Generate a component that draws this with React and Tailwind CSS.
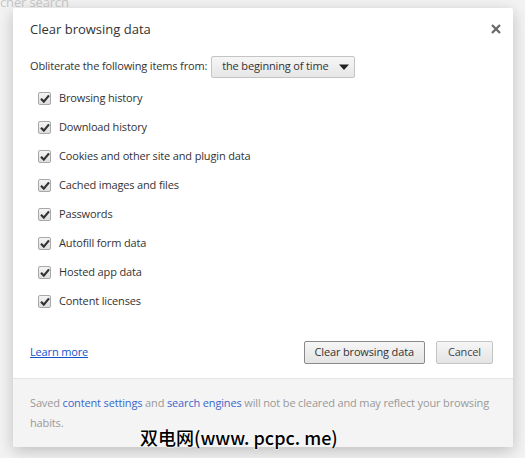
import React from 'react';

const items = [
  'Browsing history',
  'Download history',
  'Cookies and other site and plugin data',
  'Cached images and files',
  'Passwords',
  'Autofill form data',
  'Hosted app data',
  'Content licenses',
];

const Check = () => (
  <span className="flex h-[13px] w-[13px] items-center justify-center rounded-[2px] border border-[#a8a8a8] bg-gradient-to-b from-[#f4f4f4] to-[#dedede]">
    <svg width="10" height="9" viewBox="0 0 10 9">
      <path d="M1 4.8 L3.8 7.6 L9 1.4" fill="none" stroke="#333" strokeWidth="2.2" strokeLinejoin="miter" />
    </svg>
  </span>
);

const ClearBrowsingData = () => {
  return (
    <div className="relative h-[458px] w-[525px] overflow-hidden bg-[#f3f3f3] font-['Open_Sans',sans-serif] text-[11px] tracking-[-0.15px] text-[#333]">
      <div className="absolute left-0 top-[-7px] text-[13px] text-[#c8c8c8]">cher search</div>
      <div className="absolute left-[13px] top-[8px] flex h-[439px] w-[500px] flex-col rounded-[2px] bg-white shadow-[0_4px_16px_rgba(0,0,0,0.22)]">
        <div className="flex items-start justify-between pl-[17px] pr-[10px] pt-[12px]">
          <h1 className="text-[13px] font-normal tracking-normal text-[#333]">Clear browsing data</h1>
          <svg className="mt-[2px]" width="14" height="14" viewBox="0 0 14 14">
            <path d="M3 3 L11 11 M11 3 L3 11" stroke="#666" strokeWidth="2.2" />
          </svg>
        </div>
        <div className="mt-[16px] flex items-center gap-[4px] pl-[17px]">
          <span>Obliterate the following items from:</span>
          <button className="flex h-[22px] items-center gap-[9px] rounded-[2px] border border-[#c4c4c4] bg-gradient-to-b from-[#f6f6f6] to-[#e6e6e6] pl-[10px] pr-[4px] text-[#333]">
            the beginning of time
            <svg width="12" height="8" viewBox="0 0 12 8">
              <path d="M1 1.5 L11 1.5 L6 7 Z" fill="#222" />
            </svg>
          </button>
        </div>
        <div className="mt-[6px] flex flex-col pl-[25px]">
          {items.map(label => (
            <div key={label} className="flex h-[29px] items-center gap-[8px]">
              <Check />
              <span>{label}</span>
            </div>
          ))}
        </div>
        <div className="mt-auto flex items-center justify-between pb-[14px] pl-[17px] pr-[20px]">
          <a className="text-[#1155cc] underline">Learn more</a>
          <div className="flex gap-[11px]">
            <button className="h-[23px] rounded-[2px] border border-[#8a8a8a] bg-gradient-to-b from-[#f6f6f6] to-[#e4e4e4] px-[10px] text-[#333]">
              Clear browsing data
            </button>
            <button className="h-[23px] rounded-[2px] border border-[#c4c4c4] bg-gradient-to-b from-[#f6f6f6] to-[#e4e4e4] px-[11px] text-[#444]">
              Cancel
            </button>
          </div>
        </div>
        <div className="h-[69px] rounded-b-[2px] border-t border-[#e4e4e4] bg-[#f4f4f4] pl-[17px] pr-[18px] pt-[14px] leading-[20px] text-[#999]">
          Saved <span className="text-[#3a66cc]">content settings</span> and{' '}
          <span className="text-[#3a66cc]">search engines</span> will not be cleared and may reflect your browsing habits.
        </div>
      </div>
      <div className="absolute left-[140px] top-[424px] font-['Noto_Sans_CJK_SC',sans-serif] text-[18px] font-medium tracking-normal text-black [text-shadow:0_0_2px_#fff,0_0_2px_#fff,0_0_2px_#fff]">
        双电网(www. pcpc. me)
      </div>
    </div>
  );
};

export default function App() {
  return <ClearBrowsingData />;
}
